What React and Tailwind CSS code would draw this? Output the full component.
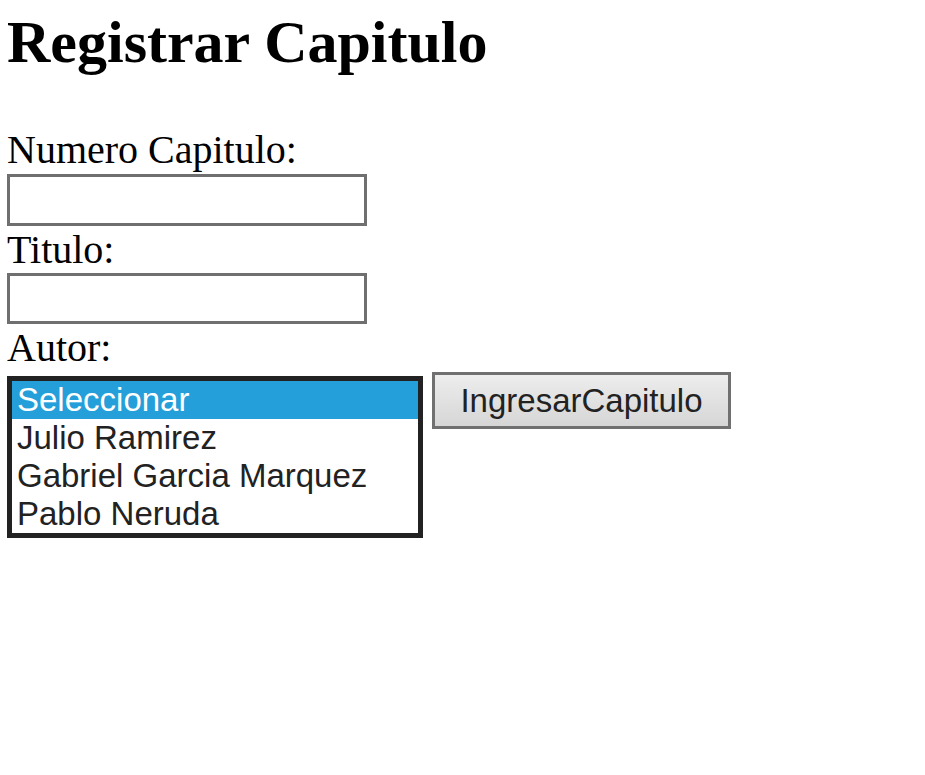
import React from 'react';

const autores = ['Seleccionar', 'Julio Ramirez', 'Gabriel Garcia Marquez', 'Pablo Neruda'];

const App = () => {
  return (
    <div className="min-h-screen bg-white px-[7px] pt-[8px] text-black" style={{ fontFamily: '"Liberation Serif", serif' }}>
      <h1 className="text-[60px] font-bold leading-[69px]">Registrar Capitulo</h1>

      <form className="mt-[49px] flex flex-col items-start">
        <label className="text-[40px] leading-[48px]">Numero Capitulo:</label>
        <input type="text" className="h-[52px] w-[360px] border-[3px] border-[#6f6f6f] bg-white" />

        <label className="text-[40px] leading-[47px]">Titulo:</label>
        <input type="text" className="h-[51px] w-[360px] border-[3px] border-[#6f6f6f] bg-white" />

        <label className="text-[40px] leading-[48px]">Autor:</label>

        <div className="flex items-start gap-[9px]">
          <div
            className="mt-[4px] w-[416px] border-[5px] border-[#222222] bg-white text-[33px] leading-[38px] text-[#222222]"
            style={{ fontFamily: '"Liberation Sans", Arial, sans-serif' }}
          >
            {autores.map((a, i) => (
              <div
                key={a}
                className={`h-[38px] px-[5px] whitespace-nowrap ${i === 0 ? 'bg-[#259fd9] text-white' : ''}`}
              >
                {a}
              </div>
            ))}
          </div>

          <button
            type="button"
            className="h-[57px] w-[299px] border-[3px] border-[#707070] bg-gradient-to-b from-[#ededed] to-[#d6d6d6] text-[33px] text-[#222222]"
            style={{ fontFamily: '"Liberation Sans", Arial, sans-serif' }}
          >
            IngresarCapitulo
          </button>
        </div>
      </form>
    </div>
  );
};

export default App;
